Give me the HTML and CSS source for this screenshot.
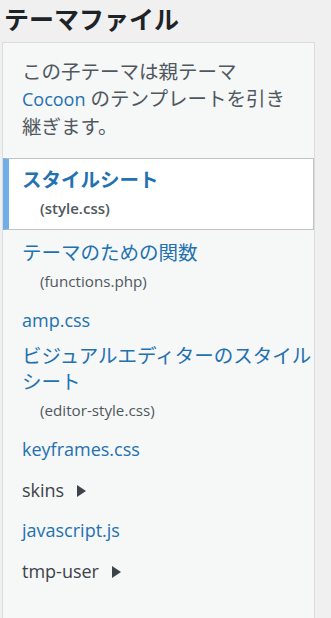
FILE: index.html
```html
<!DOCTYPE html>
<html lang="ja">
<head>
<meta charset="utf-8">
<title>テーマファイル</title>
<link rel="stylesheet" href="styles.css">
</head>
<body>
<h2 class="title">テーマファイル</h2>
<div class="panel">
  <p class="desc">この子テーマは親テーマ <a class="parent latin" href="#">Cocoon</a> のテンプレートを引き継ぎます。</p>
  <ul class="tree">
    <li class="item current">
      <a class="label" href="#">スタイルシート</a>
      <span class="file">(style.css)</span>
    </li>
    <li class="item">
      <a class="label" href="#">テーマのための関数</a>
      <span class="file">(functions.php)</span>
    </li>
    <li class="item"><a class="label latin" href="#">amp.css</a></li>
    <li class="item">
      <a class="label" href="#">ビジュアルエディターのスタイルシート</a>
      <span class="file">(editor-style.css)</span>
    </li>
    <li class="item"><a class="label latin" href="#">keyframes.css</a></li>
    <li class="item folder">
      <span class="folder-label latin">skins<svg class="arrow" viewBox="0 0 9 12" width="9" height="12"><path d="M0 0 L9 6 L0 12 Z"/></svg></span>
    </li>
    <li class="item"><a class="label latin" href="#">javascript.js</a></li>
    <li class="item folder">
      <span class="folder-label latin">tmp-user<svg class="arrow" viewBox="0 0 9 12" width="9" height="12"><path d="M0 0 L9 6 L0 12 Z"/></svg></span>
    </li>
  </ul>
</div>
</body>
</html>
```
FILE: styles.css
```css
html {
  overflow: hidden;
}

body {
  margin: 0;
  background: #f0f0f1;
  font-family: "Open Sans", "Noto Sans CJK JP", sans-serif;
  color: #3c434a;
}

.title {
  margin: 0 0 7px;
  padding: 3px 0 0 4px;
  font-size: 25px;
  line-height: 32px;
  font-weight: 700;
  color: #1d2327;
}

.panel {
  box-sizing: border-box;
  width: 313px;
  height: 620px;
  margin-left: 2px;
  border: 1px solid #dcdcde;
  background: #f6f7f7;
}

.desc {
  margin: 0;
  padding: 15px 10px 0 19px;
  font-size: 19.5px;
  line-height: 27px;
  color: #50575e;
}

.parent {
  color: #2271b1;
  text-decoration: none;
}

.tree {
  list-style: none;
  margin: 18px 0 0;
  padding: 0;
}

.item {
  margin: 10px 0 0;
  padding: 0 0 0 19px;
}

.item.current {
  margin-top: 0;
  padding: 8px 0 5px 13px;
  background: #fff;
  border: 1px solid #c3c4c7;
  border-left: 6px solid #72aee6;
}

.label {
  display: block;
  font-size: 19.5px;
  line-height: 26px;
  color: #2271b1;
  text-decoration: none;
}

.latin {
  font-size: 18px;
}

.current .label {
  font-weight: 600;
}

.file {
  display: block;
  padding-left: 18px;
  font-size: 15.2px;
  line-height: 31px;
  color: #50575e;
}

.current .file {
  font-size: 15px;
  font-weight: 600;
}

.folder {
  padding-top: 5px;
  padding-bottom: 4px;
}

.folder-label {
  display: flex;
  align-items: center;
  gap: 13px;
  line-height: 26px;
  color: #3c434a;
}

.arrow {
  fill: #3c434a;
  margin-top: 1px;
}
```
